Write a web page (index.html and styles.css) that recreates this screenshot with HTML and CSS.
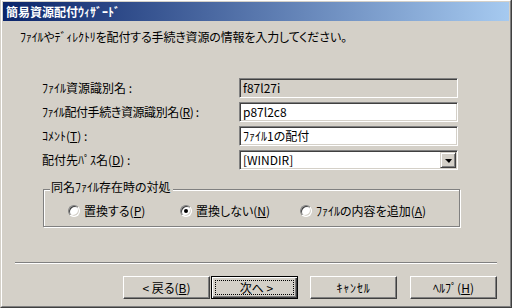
FILE: index.html
```html
<!DOCTYPE html>
<html lang="ja">
<head>
<meta charset="utf-8">
<title>簡易資源配付ｳｨｻﾞｰﾄﾞ</title>
<link rel="stylesheet" href="styles.css">
</head>
<body>
<div class="window">
  <div class="frame">
    <div class="titlebar"><span class="title">簡易資源配付ｳｨｻﾞｰﾄﾞ</span></div>
    <div class="content">
      <p class="intro">ﾌｧｲﾙやﾃﾞｨﾚｸﾄﾘを配付する手続き資源の情報を入力してください。</p>
      <div class="form">
        <label class="lbl">ﾌｧｲﾙ資源識別名 :</label>
        <div class="field disabled"><span class="val">f87l27i</span></div>
        <label class="lbl tight">ﾌｧｲﾙ配付手続き資源識別名(<u>R</u>) :</label>
        <div class="field"><span class="val">p87l2c8</span></div>
        <label class="lbl">ｺﾒﾝﾄ(<u>T</u>) :</label>
        <div class="field"><span class="val">ﾌｧｲﾙ1の配付</span></div>
        <label class="lbl">配付先ﾊﾟｽ名(<u>D</u>) :</label>
        <div class="field combo"><span class="val">[WINDIR]</span><span class="drop"><span class="arrow"></span></span></div>
      </div>
      <div class="group">
        <span class="legend">同名ﾌｧｲﾙ存在時の対処</span>
        <div class="radios">
          <span class="ritem"><span class="radio"></span><span>置換する(<u>P</u>)</span></span>
          <span class="ritem"><span class="radio checked"></span><span>置換しない(<u>N</u>)</span></span>
          <span class="ritem"><span class="radio"></span><span>ﾌｧｲﾙの内容を追加(<u>A</u>)</span></span>
        </div>
      </div>
      <div class="sep"></div>
      <div class="buttons">
        <span class="btn back">&lt; 戻る(<u>B</u>)</span>
        <span class="btn next default"><span class="focus">次へ &gt;</span></span>
        <span class="btn cancel">ｷｬﾝｾﾙ</span>
        <span class="btn help">ﾍﾙﾌﾟ(<u>H</u>)</span>
      </div>
    </div>
  </div>
</div>
</body>
</html>
```

FILE: styles.css
```css
html, body {
  margin: 0;
  padding: 0;
  background: #D4D0C8;
}
body {
  width: 512px;
  height: 308px;
  overflow: hidden;
  font-family: "Noto Sans CJK JP", "Noto Sans", sans-serif;
  font-size: 12px;
  line-height: 14px;
  color: #000;
  font-feature-settings: "palt";
}
.window {
  width: 512px;
  height: 308px;
  box-sizing: border-box;
  border-left: 1px solid #D4D0C8;
  border-right: 1px solid #404040;
  border-bottom: 1px solid #404040;
  background: #D4D0C8;
}
.frame {
  height: 100%;
  box-sizing: border-box;
  border-top: 1px solid #fff;
  border-left: 1px solid #fff;
  border-right: 1px solid #808080;
  border-bottom: 1px solid #808080;
  padding: 1px 1px 0 1px;
}
.titlebar {
  height: 19px;
  background: linear-gradient(to right, #0A246A, #A6CAF0);
  padding-left: 3px;
  display: flex;
  align-items: center;
}
.title {
  color: #fff;
  font-weight: bold;
  font-size: 12px;
  line-height: 14px;
}
.intro {
  margin: 9px 0 0 17px;
  height: 14px;
  letter-spacing: -0.15px;
}
.form {
  margin: 34px 0 0 39px;
  display: grid;
  grid-template-columns: 197px 219px;
  grid-auto-rows: 20px;
  row-gap: 4px;
}
.lbl {
  display: flex;
  align-items: center;
}
.lbl.tight {
  letter-spacing: -0.4px;
}
.field {
  box-sizing: border-box;
  height: 20px;
  background: #fff;
  border: 1px solid;
  border-color: #808080 #fff #fff #808080;
  box-shadow: inset 1px 1px 0 #404040, inset -1px -1px 0 #D4D0C8;
  padding: 0 2px 0 2px;
  display: flex;
  align-items: center;
}
.field.disabled {
  background: #D4D0C8;
}
.val {
  flex: 1;
  padding-left: 1px;
}
.drop {
  width: 16px;
  height: 16px;
  box-sizing: border-box;
  background: #D4D0C8;
  border: 1px solid;
  border-color: #D4D0C8 #404040 #404040 #D4D0C8;
  box-shadow: inset 1px 1px 0 #fff, inset -1px -1px 0 #808080;
  display: flex;
  align-items: center;
  justify-content: center;
  margin-right: -1px;
}
.arrow {
  width: 0;
  height: 0;
  border-left: 4px solid transparent;
  border-right: 3px solid transparent;
  border-top: 4px solid #000;
  margin-top: 1px;
}
.group {
  position: relative;
  margin: 19px 0 0 40px;
  width: 417px;
  height: 38px;
  box-sizing: border-box;
  border: 1px solid #808080;
  box-shadow: inset 1px 1px 0 #fff, 1px 1px 0 #fff;
  padding: 14px 0 8px 24px;
}
.legend {
  position: absolute;
  left: 6px;
  top: -10px;
  padding: 0 2px 0 1px;
  background: #D4D0C8;
  line-height: 14px;
}
.radios {
  display: grid;
  grid-template-columns: 112px 120px auto;
  height: 14px;
}
.ritem {
  display: flex;
  align-items: center;
  gap: 4px;
}
.radio {
  position: relative;
  width: 12px;
  height: 12px;
  box-sizing: border-box;
  border-radius: 50%;
  background: #fff;
  border: 1px solid;
  border-color: #808080 #fff #fff #808080;
  box-shadow: inset 1px 1px 0 #404040, inset -1px -1px 0 #D4D0C8;
  flex: none;
}
.radio.checked::after {
  content: "";
  position: absolute;
  left: 3px;
  top: 3px;
  width: 4px;
  height: 4px;
  border-radius: 50%;
  background: #000;
}
.sep {
  margin: 35px 0 0 12px;
  width: 482px;
  height: 0;
  border-top: 1px solid #808080;
  border-bottom: 1px solid #fff;
}
.buttons {
  margin: 12px 0 0 120px;
  display: flex;
}
.btn {
  width: 87px;
  height: 23px;
  box-sizing: border-box;
  border: 1px solid;
  border-color: #fff #404040 #404040 #fff;
  box-shadow: inset -1px -1px 0 #808080;
  display: flex;
  align-items: center;
  justify-content: center;
}
.btn.next { margin-left: 1px; }
.btn.cancel { margin-left: 12px; letter-spacing: 0.8px; }
.btn.help { margin-left: 13px; }
.btn.default {
  border: 1px solid #000;
  box-shadow: inset 1px 1px 0 #fff, inset -1px -1px 0 #404040, inset -2px -2px 0 #808080;
  padding: 3px;
}
.focus {
  flex: 1;
  align-self: stretch;
  border: 1px dotted #000;
  display: flex;
  align-items: center;
  justify-content: center;
  padding-left: 4px;
}
u {
  text-decoration: underline;
  text-underline-offset: 1px;
}
```
